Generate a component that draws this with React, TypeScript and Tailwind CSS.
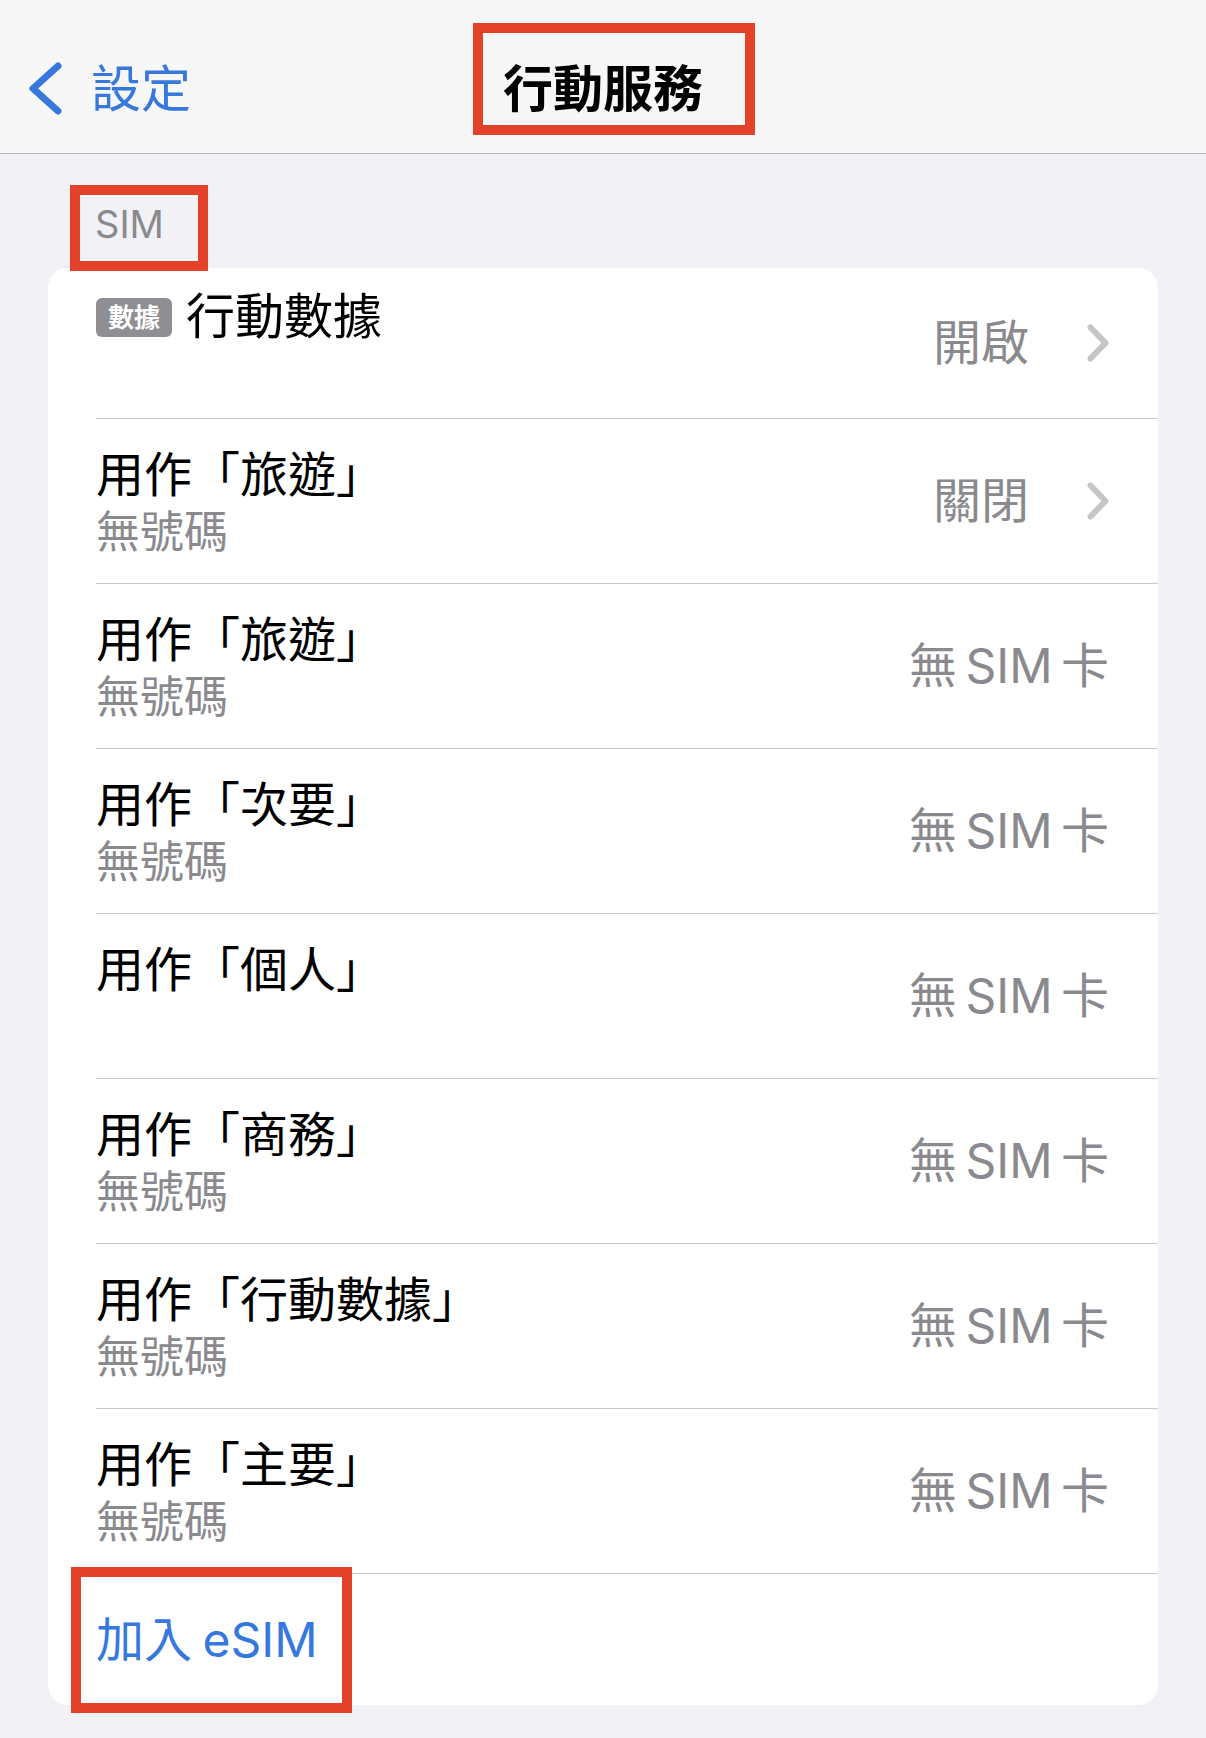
import React from "react";

const font = "font-['Inter','Noto_Sans_CJK_TC',sans-serif]";

type Row = {
  title: string;
  sub?: string;
  value: string;
  chevron?: boolean;
};

const rows: Row[] = [
  { title: "用作「旅遊」", sub: "無號碼", value: "關閉", chevron: true },
  { title: "用作「旅遊」", sub: "無號碼", value: "無 SIM 卡" },
  { title: "用作「次要」", sub: "無號碼", value: "無 SIM 卡" },
  { title: "用作「個人」", value: "無 SIM 卡" },
  { title: "用作「商務」", sub: "無號碼", value: "無 SIM 卡" },
  { title: "用作「行動數據」", sub: "無號碼", value: "無 SIM 卡" },
  { title: "用作「主要」", sub: "無號碼", value: "無 SIM 卡" },
];

function Chevron() {
  return (
    <svg width="22" height="38" viewBox="0 0 22 38" className="ml-[58px] shrink-0">
      <polyline
        points="3.5,3.5 18.5,19 3.5,34.5"
        fill="none"
        stroke="#c5c5c8"
        strokeWidth={6}
        strokeLinecap="round"
        strokeLinejoin="round"
      />
    </svg>
  );
}

function Value({ text, chevron }: { text: string; chevron?: boolean }) {
  return (
    <div className="flex items-center">
      <span className="text-[48px] leading-[56px] text-[#8a8a8e] [word-spacing:-5px]">{text}</span>
      {chevron && <Chevron />}
    </div>
  );
}

export default function App() {
  return (
    <div className={`min-h-screen bg-[#f2f2f6] pb-[31px] ${font}`}>
      {/* Nav bar */}
      <nav className="relative grid h-[154px] grid-cols-[1fr_auto_1fr] items-center border-b border-[#b6b6ba] bg-[#f7f7f7] pt-[24px]">
        <div className="flex items-center pl-[28px]">
          <svg width="34" height="53" viewBox="0 0 34 53">
            <polyline
              points="30,4 5,26.5 30,49"
              fill="none"
              stroke="#3778dd"
              strokeWidth={7}
              strokeLinecap="round"
              strokeLinejoin="round"
            />
          </svg>
          <span className="ml-[29px] text-[50px] leading-[60px] text-[#3778dd]">設定</span>
        </div>
        <h1 className="text-[50px] font-bold leading-[60px] text-black">行動服務</h1>
        <div />
        <div className="absolute left-[473px] top-[23px] h-[112px] w-[282px] border-[10px] border-[#e4412b]" />
      </nav>

      <div className="px-[48px]">
        {/* Section header */}
        <div className="pt-[31px]">
          <div className="relative z-10 ml-[22px] h-[86px] w-[138px] border-[10px] border-[#e4412b] pl-[15px] pt-[9px]">
            <span className="text-[38px] leading-[40px] text-[#8a8a8e]">SIM</span>
          </div>
        </div>

        {/* Card */}
        <div className="-mt-[3px] rounded-[20px] bg-white">
          {/* Cellular data row */}
          <div className="pl-[48px]">
            <div className="flex h-[151px] justify-between border-b border-[#c8c8cc] pr-[49px]">
              <div className="flex items-center self-start pt-[21px]">
                <span className="rounded-[6px] bg-[#8e8e93] px-[12px] text-[26px] font-bold leading-[39px] text-white">
                  數據
                </span>
                <span className="ml-[14px] text-[49px] leading-[56px] text-black">行動數據</span>
              </div>
              <div className="self-center">
                <Value text="開啟" chevron />
              </div>
            </div>
          </div>

          {rows.map((row, i) => (
            <div key={i} className="pl-[48px]">
              <div className="flex h-[165px] items-center justify-between border-b border-[#c8c8cc] pr-[49px]">
                <div className="flex flex-col self-start pt-[28px]">
                  <span className="text-[48px] leading-[56px] text-black">{row.title}</span>
                  <span className="h-[58px] text-[44px] leading-[58px] text-[#8a8a8e]">{row.sub ?? ""}</span>
                </div>
                <Value text={row.value} chevron={row.chevron} />
              </div>
            </div>
          ))}

          {/* Add eSIM */}
          <div className="relative flex h-[131px] items-center pl-[48px]">
            <span className="text-[48px] leading-[56px] text-[#3778dd] [word-spacing:-3px]">加入 eSIM</span>
            <div className="absolute -top-[7px] left-[23px] h-[146px] w-[281px] border-[10px] border-[#e4412b]" />
          </div>
        </div>
      </div>
    </div>
  );
}
